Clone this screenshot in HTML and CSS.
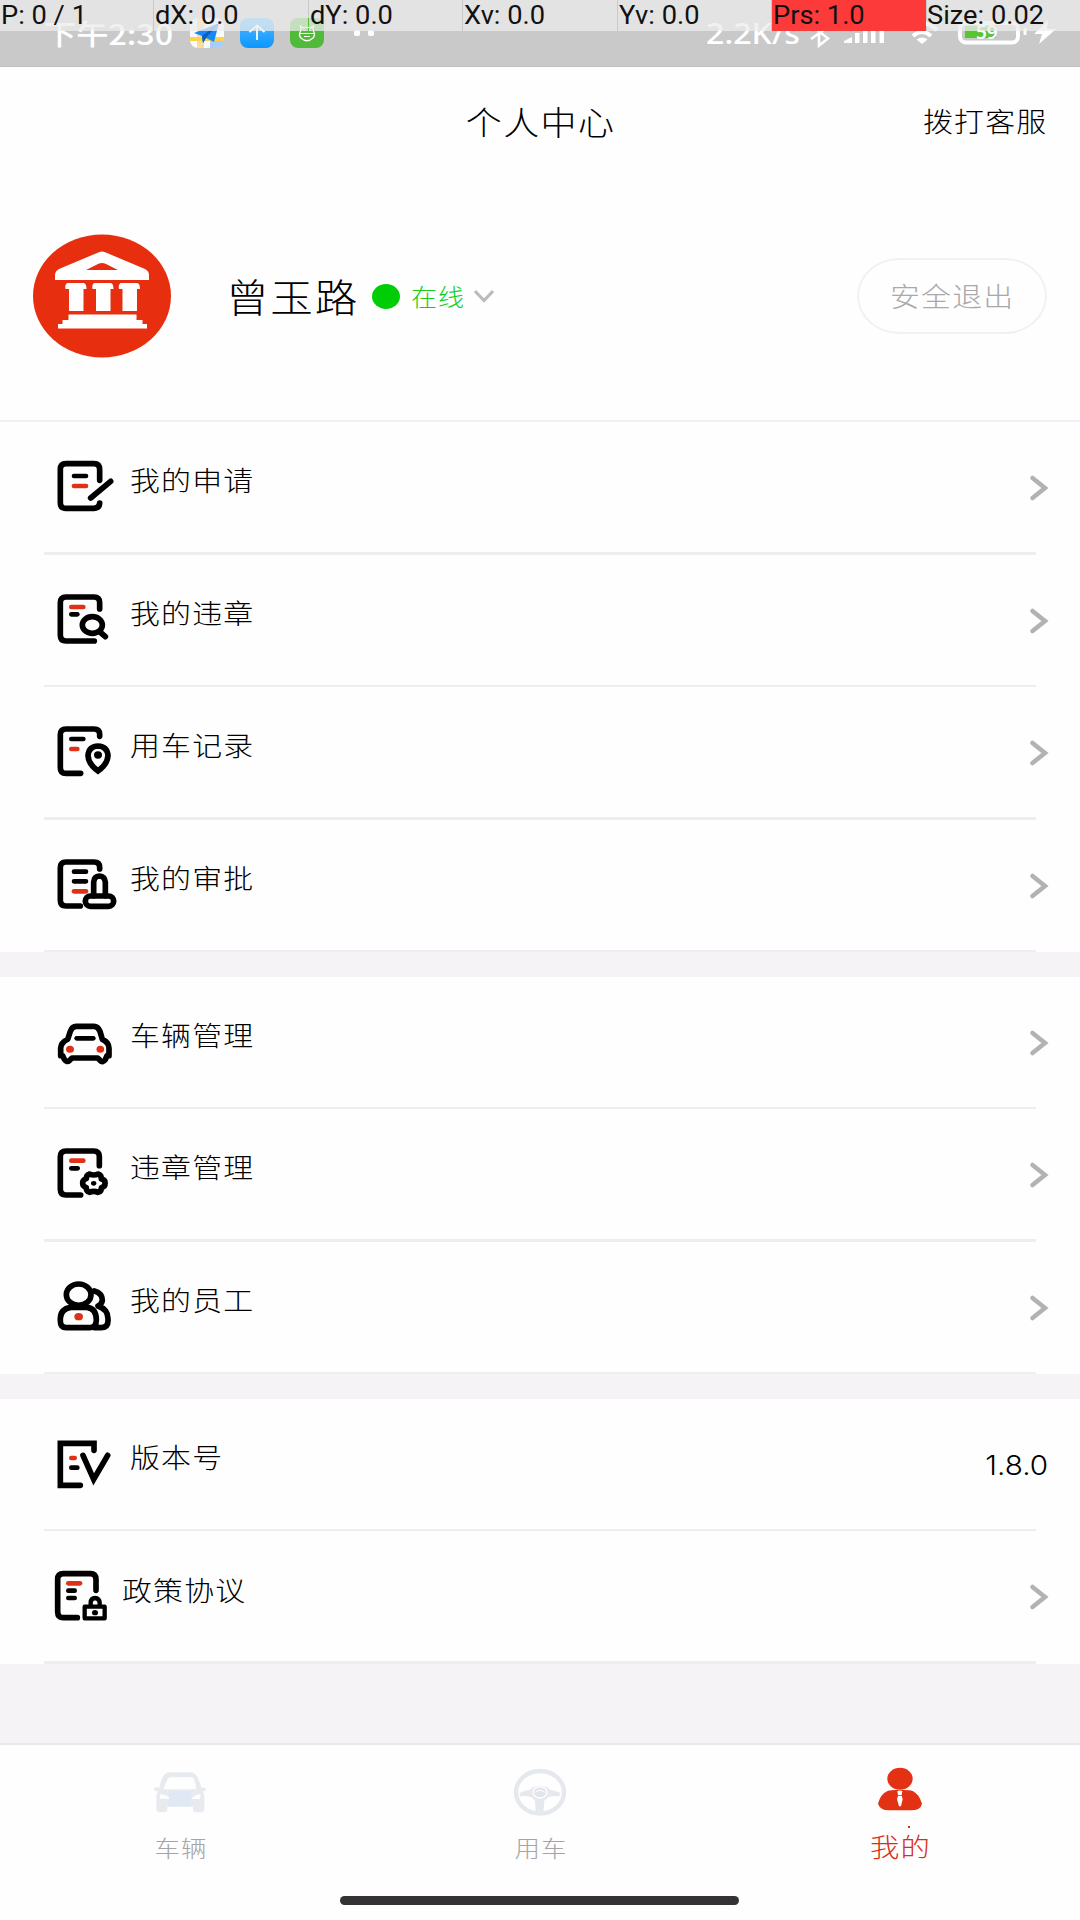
FILE: index.html
```html
<!DOCTYPE html>
<html lang="zh-CN">
<head>
<meta charset="utf-8">
<title>个人中心</title>
<link rel="stylesheet" href="styles.css">
</head>
<body>
<div class="screen">
  <div class="pointer-bar">
    <span class="cell"><b>P: 0 / 1</b></span><span class="cell"><b>dX: 0.0</b></span><span class="cell"><b>dY: 0.0</b></span><span class="cell"><b>Xv: 0.0</b></span><span class="cell"><b>Yv: 0.0</b></span><span class="cell hot"><b>Prs: 1.0</b></span><span class="cell"><b>Size: 0.02</b></span>
  </div>
  <div class="status">
    <span class="clock"><span>下午2:30</span></span>
    <svg class="app" viewBox="0 0 34 30"><rect width="34" height="30" rx="8" fill="#fafafa"/><path d="M7 0h7v30H7z" fill="#fbdc9c"/><path d="M0 19h34v4H0z" fill="#fbd34c"/><path d="M20 23h14v1q-1 6-8 6h-6z" fill="#a9cdfa"/><path d="M4 15 29 5 24 24 16 20 13 25 12 18z" fill="#1689f5"/><path d="M29 5 12 18 13 25 16 20z" fill="#0b5fc4"/></svg>
    <svg class="app" viewBox="0 0 34 30"><defs><linearGradient id="up" x1="0" y1="0" x2="0" y2="1"><stop offset="0" stop-color="#58b8ff"/><stop offset="1" stop-color="#0a97ff"/></linearGradient></defs><rect width="34" height="30" rx="8" fill="url(#up)"/><path d="M17 22V8M9.500 14 17 7.500 24.500 14" fill="none" stroke="#fff" stroke-width="1.800"/></svg>
    <svg class="app" viewBox="0 0 34 30"><rect width="34" height="30" rx="8" fill="#52ba3a"/><g fill="none" stroke="#fff" stroke-width="1.200"><path d="M11 12 10.500 8l3 2q3.500-1.500 7 0l3-2L23 12q3 5 0 8-6 5.500-12 0-3-3 0-8zM9 15.500h16M14 18.500h6"/><path d="M13.500 12.500h1.500M19 12.500h1.500"/></g></svg>
    <span class="more"><i></i><i></i></span>
    <span class="speed"><span>2.2K/s</span></span>
    <svg class="signals" viewBox="808 20 252 32" fill="none" stroke="#fff">
      <path d="M811 28 828 41.500 819 48.500V23l9 7-17 12" stroke-width="2.600"/>
      <path d="M844 46v-2l8-4v6zM855 36h4.500v10H855zM863 32h4.500v14H863zM871 28h4.500v18H871zM879.500 24h4.500v22h-4.500z" fill="#fff" stroke="none"/>
      <path d="M907 33q15-14 30 0M913 39q9-8 18 0" stroke-width="4"/><path d="M916.500 42.500q5.500-4 11 0L922 47z" fill="#fff" stroke="none"/>
      <rect x="960" y="26" width="58" height="19.500" rx="6" stroke-width="4"/><path d="M965 29h31v12h-31z" fill="#59c332" stroke="none"/><path d="M1025 31v7" stroke-width="3"/>
      <path d="M1048 23 1034 37h8l-3 10 17-15h-9z" fill="#fff" stroke="none"/>
      <text x="976" y="42" class="battery">59</text>
    </svg>
  </div>

  <header class="nav"><span></span><h1><span class="wide">个人中心</span></h1><a class="call"><span class="wide">拨打客服</span></a></header>

  <section class="profile">
    <svg class="avatar" viewBox="33 235 138 124"><ellipse cx="102" cy="297" rx="69" ry="61.500" fill="#e72f10"/><g fill="#fff"><path fill-rule="evenodd" d="M55 281v-5q0-4 4-6l38-16q5-3 10 0l38 16q4 2 4 6v5zM86 271h32l-12-6q-4-2-8 0z"/><path id="col" d="M67 284h17q2.500 1 2.500 6h-3v22H69v-22h-3.500q-1-4 1.500-6z"/><use href="#col" x="27"/><use href="#col" x="53.500"/><path d="M68.500 315.500h68v5.500h6v4h4.500v4.500H58V325h4.500v-4h6z"/></g></svg>
    <strong class="name"><span class="wide">曾玉路</span></strong>
    <i class="dot"></i>
    <span class="online"><span class="wide">在线</span></span>
    <svg class="down" viewBox="0 0 20 14" fill="none" stroke="#bcbabd" stroke-width="3"><path d="M1 2 10 11.500 19 2"/></svg>
    <button class="logout"><span class="wide">安全退出</span></button>
  </section>

  <main>
    <section class="group">
      <div class="row"><svg class="icon" viewBox="45 84 180 180"><path class="k" d="M179 151V119Q179 101 162 101H78Q61 101 61 118V218Q61 235 78 235H160Q178 235 179 219M152 204 212 154"/><path class="l" d="M102 138H138"/><path class="l r" d="M102 168H138"/></svg><span class="label">我的申请</span><svg class="go" viewBox="0 0 18 26"><path d="M2.500 3 15 13 2.500 23"/></svg></div>
      <div class="row"><svg class="icon" viewBox="45 481 180 180"><path class="k" d="M179 535V516Q179 499 162 499H78Q61 499 61 516V614Q61 631 78 631H163"/><ellipse class="k" cx="157" cy="583" rx="30" ry="25"/><path class="k" d="M180 604 196 618"/><path class="l r" d="M94 529H130"/><path class="l" d="M94 551H112"/></svg><span class="label">我的违章</span><svg class="go" viewBox="0 0 18 26"><path d="M2.500 3 15 13 2.500 23"/></svg></div>
      <div class="row"><svg class="icon" viewBox="45 68 180 180"><path class="k" d="M179 108V102Q179 86 162 86H78Q61 86 61 103V202Q61 219 78 219H122"/><path class="k m" d="M174 212Q145 191 144 166Q146 138 174 137Q202 138 204 166Q203 191 174 212Z"/><ellipse cx="174" cy="164" rx="12" ry="11"/><path class="l" d="M94 116H130"/><path class="l r" d="M94 146H112"/></svg><span class="label">用车记录</span><svg class="go" viewBox="0 0 18 26"><path d="M2.500 3 15 13 2.500 23"/></svg></div>
      <div class="row"><svg class="icon" viewBox="45 466 180 180" overflow="visible"><path class="k" d="M179 505V500Q179 484 162 484H78Q61 484 61 501V599Q61 616 78 616H121"/><path class="k" d="M161 585V545Q162 527 178 526Q195 527 196 545V585"/><rect class="k" x="136" y="586" width="85" height="31" rx="15"/><path class="l" d="M102 513H138M102 542H138"/><path class="l r" d="M102 572H138"/></svg><span class="label">我的审批</span><svg class="go" viewBox="0 0 18 26"><path d="M2.500 3 15 13 2.500 23"/></svg></div>
    </section>
    <section class="group">
      <div class="row"><svg class="icon" viewBox="45 218 180 180"><path class="k" d="M83 297 91 273Q96 258 109 258H162Q174 258 180 273L187 297Q207 306 207 323V346H201L196 358Q188 369 180 360L173 353H96L89 360Q80 368 73 357L68 346H62V323Q63 307 83 297Z"/><path class="l" d="M110 294H160"/><ellipse class="red" cx="90" cy="327" rx="12" ry="10.500"/><ellipse class="red" cx="181" cy="327" rx="11.500" ry="10.500"/></svg><span class="label">车辆管理</span><svg class="go" viewBox="0 0 18 26"><path d="M2.500 3 15 13 2.500 23"/></svg></div>
      <div class="row"><svg class="icon" viewBox="45 615 180 180"><path class="k" d="M178 677V650Q178 633 161 633H78Q61 633 61 650V748Q61 765 78 765H122"/><path class="k" d="M149 702Q161 708 174 702Q185 706 184 717Q197 720 195 730Q196 740 184 743Q184 755 174 757Q161 751 149 757Q138 754 139 743Q128 739 128 730Q127 720 139 716Q138 706 149 702Z"/><ellipse cx="161" cy="730" rx="8" ry="7"/><path class="l r" d="M94 662H130"/><path class="l" d="M94 685H113"/></svg><span class="label">违章管理</span><svg class="go" viewBox="0 0 18 26"><path d="M2.500 3 15 13 2.500 23"/></svg></div>
      <div class="row"><svg class="icon" viewBox="45 113 180 180"><path class="k" d="M163 152Q187 159 187 180Q186 191 174 197Q204 207 204 235V242Q204 262 183 262H165"/><ellipse class="k" cx="116" cy="163" rx="37" ry="32"/><path class="k" d="M92 201H141Q169 204 169 239Q169 262 150 262H79Q61 262 61 242V234Q62 206 92 201Z"/><ellipse class="red" cx="116" cy="229" rx="13" ry="11"/></svg><span class="label">我的员工</span><svg class="go" viewBox="0 0 18 26"><path d="M2.500 3 15 13 2.500 23"/></svg></div>
    </section>
    <section class="group">
      <div class="row"><svg class="icon" viewBox="45 585 180 180"><path class="k m" d="M162 631V610H61V736H121M129 646 161 718 203 646"/><path class="l r" d="M94 654H104"/><path class="l" d="M94 683H112"/></svg><span class="label">版本号</span><span class="version">1.8.0</span></div>
      <div class="row agreement"><svg class="icon" viewBox="36 143 180 180"><path class="k" d="M168 213V181Q168 163 151 163H70Q53 163 53 180V277Q53 295 70 295H112"/><path class="k n" d="M152 256V250Q153 236 165 236Q178 237 179 250V256M134 262H194V297H134Z"/><ellipse cx="165" cy="280" rx="9" ry="8"/><path class="l r" d="M85 192H120"/><path class="l" d="M85 214H104M85 236H104"/></svg><span class="label">政策协议</span><svg class="go" viewBox="0 0 18 26"><path d="M2.500 3 15 13 2.500 23"/></svg></div>
    </section>
  </main>

  <footer class="tabs">
    <div class="tab"><svg class="tabicon" viewBox="150 115 180 150"><path fill-rule="evenodd" fill="#e7ebf0" d="M162 176Q168 171 178 174Q184 143 195 132Q201 128 211 128H270Q281 128 286 134Q297 146 304 174Q315 172 318 177L316 184H308L313 197V242Q311 248 300 248H288Q280 247 279 242V231H202V242Q200 248 191 248H181Q170 247 169 242V197L174 184H164ZM191 179H289Q285 145 276 143H209Q199 148 191 179ZM180 194V207H210Q207 198 180 194ZM302 194Q279 196 275 208H300Z"/><path d="M210 184H273V230H204Z" fill="#dfe8f3"/></svg><span class="wide">车辆</span></div>
    <div class="tab"><svg class="tabicon" viewBox="1230 115 180 150"><ellipse cx="1320" cy="188" rx="72" ry="64" fill="none" stroke="#e5e8ec" stroke-width="13"/><path fill="#e5e8ec" d="M1258 190Q1270 184 1289 180Q1300 168 1320 168Q1340 168 1350 180Q1370 184 1381 190L1378 200Q1359 198 1345 202L1333 213 1330 247H1307L1305 213 1294 202Q1279 198 1261 200Z"/><ellipse cx="1320" cy="188" rx="21" ry="17" fill="#e2e6eb" stroke="#fff" stroke-width="4"/><path d="M1305 188Q1320 176 1335 188" fill="none" stroke="#fff" stroke-width="3"/></svg><span class="wide">用车</span></div>
    <div class="tab active"><svg class="tabicon" viewBox="210 115 180 150" overflow="visible"><ellipse cx="300" cy="147" rx="38" ry="33" fill="#e23113"/><path fill="#e23113" d="M264 183Q275 180 300 181Q327 180 338 184Q357 193 366 222Q362 242 332 242H267Q240 241 234 222Q241 193 264 183Z"/><path d="M292 184Q299 181 307 184L305 196H294ZM294 198H305L308 209 303 230H297L291 209Z" fill="#fff"/></svg><span class="wide">我的</span><i class="speck"></i></div>
  </footer>
  <div class="home"></div>
</div>
</body>
</html>
```
FILE: styles.css
```css
* { box-sizing: border-box; }
body {
  margin: 0;
  background: #fefefe;
  color: #000;
  font-family: "Noto Sans CJK SC", sans-serif;
  font-weight: 300;
}
i { display: block; }
svg { display: block; flex: none; }
.screen {
  position: relative;
  width: 1080px;
  height: 1920px;
  overflow: hidden;
  display: flex;
  flex-direction: column;
}
.wide {
  display: inline-block;
  white-space: nowrap;
  letter-spacing: .04em;
  margin-right: -.04em;
  transform: scaleX(1.107);
}

/* pointer readout laid over the status bar */
.pointer-bar {
  position: absolute;
  inset: 0 0 auto 0;
  height: 31px;
  z-index: 2;
  display: grid;
  grid-template-columns: repeat(7, 1fr);
  column-gap: 1px;
}
.cell {
  background: rgba(236, 236, 236, .74);
  padding-left: 1px;
  color: #111;
  font: 400 25px/31px Roboto, sans-serif;
  white-space: nowrap;
}
.cell b {
  display: inline-block;
  font-weight: 400;
  transform: scaleX(1.09);
  transform-origin: left;
}
.cell.hot { background: #fd3a3a; }
.cell:last-child { padding-left: 0; }

.status {
  height: 67px;
  flex: none;
  background: #cac9ca;
  border-bottom: 1px solid #c2c1c2;
  display: flex;
  align-items: center;
  padding-left: 44px;
  color: #fff;
}
.clock {
  width: 146px;
  font-size: 28px;
  font-weight: 500;
  line-height: 62px;
  white-space: nowrap;
}
.clock span, .speed span { display: inline-block; transform-origin: left; }
.clock span { transform: scaleX(1.15); }
.app { width: 34px; height: 30px; margin-right: 16px; }
.more { display: flex; gap: 8px; margin-left: 14px; width: 352px; }
.more i { width: 6px; height: 6px; border-radius: 2px; background: #fff; }
.speed {
  width: 102px;
  font: 500 28px/66px "Noto Sans", sans-serif;
  white-space: nowrap;
}
.speed span { transform: scaleX(1.15); }
.signals { width: 252px; height: 32px; }
.battery { font: 600 19px "Noto Sans", sans-serif; fill: #fff; stroke: none; }

.nav {
  height: 108px;
  flex: none;
  display: grid;
  grid-template-columns: 1fr auto 1fr;
  align-items: center;
  padding-right: 34px;
  padding-left: 34px;
}
.nav h1 { margin: 0; font-size: 32.500px; font-weight: 300; line-height: 50px; }
.call { text-align: right; font-size: 27px; line-height: 48px; }
.call .wide { transform-origin: right; }

.profile {
  height: 247px;
  flex: none;
  border-bottom: 2px solid #f0eff1;
  display: flex;
  align-items: center;
  padding: 0 33px 3px;
}
.avatar { width: 138px; height: 124px; }
.profile .wide { transform-origin: left; }
.name { width: 146px; margin-left: 55px; font-size: 38.500px; font-weight: 300; line-height: 58px; padding-bottom: 2px; }
.dot { width: 28px; height: 25px; border-radius: 50%; background: #00cd06; }
.online { width: 63px; margin-left: 11px; color: #14cd1c; font-size: 23.500px; line-height: 40px; }
.down { width: 20px; height: 14px; }
.logout {
  width: 190px;
  height: 76px;
  margin-left: auto;
  padding: 0;
  border: 2px solid #f2f0f4;
  border-radius: 42px / 38px;
  background: none;
  color: #aaa8ab;
  font: 300 27px/68px "Noto Sans CJK SC", sans-serif;
}
.profile .logout .wide { transform-origin: center; }

main { height: 1321px; background: #f5f3f6; flex: none; }
.group { margin-bottom: 24.500px; background: #fefefe; }
.row {
  position: relative;
  height: 132.500px;
  padding: 0 32px 0 55px;
  display: flex;
  align-items: center;
}
.row::after {
  content: "";
  position: absolute;
  inset: auto 44px 0 44px;
  height: 2.500px;
  background: #efedf0;
}
.icon { width: 60px; height: 60px; }
.icon .k { fill: none; stroke: #000; stroke-width: 17; stroke-linecap: round; stroke-linejoin: round; }
.icon .m { stroke-linejoin: miter; }
.icon .n { stroke-width: 13; }
.icon .l { fill: none; stroke: #000; stroke-width: 14; stroke-linecap: round; }
.icon .r { stroke: #e03116; }
.icon .red { fill: #e03116; }
.label {
  margin-left: 15px;
  padding-bottom: 16px;
  font-size: 27px;
  letter-spacing: .04em;
  line-height: 40px;
  transform: scaleX(1.107);
  transform-origin: left;
}
.agreement { padding-left: 52px; }
.agreement .label { margin-left: 10px; padding-bottom: 14px; }
.go { width: 18px; height: 26px; margin-left: auto; overflow: visible; }
.go path { fill: none; stroke: #b3b1b4; stroke-width: 4.500; stroke-linecap: round; }
.version {
  margin-left: auto;
  padding-top: 3px;
  font: 300 27px/40px Inter, sans-serif;
  transform: scaleX(1.1);
  transform-origin: right;
}

.tabs {
  height: 177px;
  flex: none;
  background: #fefefe;
  border-top: 2px solid #eae8eb;
  display: grid;
  grid-template-columns: repeat(3, 1fr);
}
.tab {
  position: relative;
  padding-top: 23px;
  display: flex;
  flex-direction: column;
  align-items: center;
  color: #a6a4a7;
  font-size: 23px;
  line-height: 58px;
}
.tabicon { width: 60px; height: 50px; }
.tab.active { color: #d93014; font-size: 26.500px; line-height: 56px; }
.speck { position: absolute; left: 188px; top: 81px; width: 2px; height: 2px; background: #d93014; }
.home {
  position: absolute;
  left: 340px;
  top: 1896px;
  width: 399px;
  height: 9px;
  border-radius: 5px;
  background: #343234;
}
```
